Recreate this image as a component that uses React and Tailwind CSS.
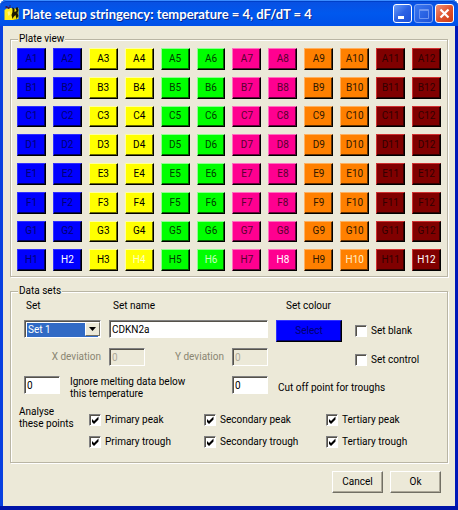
import { useState } from "react";
import clsx from "clsx";

const ROWS = ["A", "B", "C", "D", "E", "F", "G", "H"];

// one entry per pair of plate columns
const SETS = [
  { bg: "bg-[#0000ff]", edge: "border-t-[#3030ff] border-l-[#3030ff]", text: "text-[#000070]", control: "text-white" },
  { bg: "bg-[#ffff00]", edge: "border-t-[#ffffa0] border-l-[#ffffa0]", text: "text-black", control: "text-[#ffffc0]" },
  { bg: "bg-[#00ff00]", edge: "border-t-[#90ff90] border-l-[#90ff90]", text: "text-[#003c00]", control: "text-[#c8ffc0]" },
  { bg: "bg-[#ff0090]", edge: "border-t-[#ff70c0] border-l-[#ff70c0]", text: "text-[#58002e]", control: "text-white" },
  { bg: "bg-[#ff8000]", edge: "border-t-[#ffb060] border-l-[#ffb060]", text: "text-[#301800]", control: "text-[#fff0c8]" },
  { bg: "bg-[#800000]", edge: "border-t-[#d03030] border-l-[#d03030]", text: "text-[#300000]", control: "text-white" },
];

const POINTS = [
  "Primary peak",
  "Secondary peak",
  "Tertiary peak",
  "Primary trough",
  "Secondary trough",
  "Tertiary trough",
];

const SUNKEN =
  "border border-t-[#808080] border-l-[#808080] border-r-white border-b-white shadow-[inset_1px_1px_0_#55524a]";

const Well = ({ row, col }) => {
  const set = SETS[Math.floor((col - 1) / 2)];
  const isControl = row === "H" && col % 2 === 0;

  return (
    <button
      type="button"
      className={clsx(
        "flex items-center justify-center border border-r-black border-b-black shadow-[inset_-1px_-1px_0_rgba(0,0,0,0.6)]",
        set.bg,
        set.edge,
        isControl ? set.control : set.text,
      )}>
      {row}
      {col}
    </button>
  );
};

const Group = ({ title, className, children }) => (
  <fieldset
    className={clsx(
      "min-w-0 border border-[#b9b5a4] px-1.5 shadow-[1px_1px_0_#fff,inset_1px_1px_0_#fff]",
      className,
    )}>
    <legend className="ml-px bg-[#ece9d8] px-px">{title}</legend>
    {children}
  </fieldset>
);

const Check = ({ label, defaultChecked, className }) => (
  <label className={clsx("flex items-center gap-1", className)}>
    <span className="relative flex size-3">
      <input
        type="checkbox"
        defaultChecked={defaultChecked}
        className={clsx("peer size-3 appearance-none bg-white", SUNKEN)}
      />
      <svg viewBox="0 0 12 12" className="pointer-events-none absolute inset-0 hidden size-3 peer-checked:block">
        <path d="M3 5 L5 7 L9.500 2.500 V5.500 L5 10 L3 8 Z" fill="#000" />
      </svg>
    </span>
    {label}
  </label>
);

const PushButton = ({ children }) => (
  <button
    type="button"
    className="h-[22px] w-[51px] border border-t-white border-l-white border-r-[#716f64] border-b-[#716f64] bg-[#ece9d8] shadow-[inset_-1px_-1px_0_#aca899]">
    {children}
  </button>
);

const NumberBox = ({ id, value, disabled, className }) => (
  <input
    id={id}
    type="text"
    defaultValue={value}
    disabled={disabled}
    className={clsx(
      "h-[18px] w-9 pl-0.5",
      SUNKEN,
      disabled ? "bg-[#ece9d8] text-[#aca899]" : "bg-white",
      className,
    )}
  />
);

const TitleBar = () => (
  <header className="flex h-[26px] items-center rounded-t-md bg-linear-to-b from-[#0a4fe0] via-[#0058ee] to-[#0050e8] pr-1 pl-1 shadow-[inset_0_1px_0_#3a8cff,inset_0_2px_0_#0040c8]">
    <svg viewBox="0 0 15 16" className="size-4 shrink-0">
      <path d="M0 5 L3 3 L7 3 L9 5 L9 15 L0 15 Z" fill="#ffee20" />
      <path d="M8 4 L14 3 L14 14 L8 15 Z" fill="#f4e000" />
      <path d="M1 1 H3 V3 H1 Z M5 0 H6 V3 H5 Z M3 2 H5 V4 H3 Z" fill="#302060" />
      <path d="M8 2 L10 4 L10 7 L12 6 L11 3 L13 2 L14 5 L13 8 L14 11 L12 14 L11 10 L9 12 L8 14 L7 10 L8 7 Z" fill="#1c1800" />
      <path d="M3 7 L5 6 L6 9 L4 11 Z" fill="#fff68c" />
    </svg>
    <h1 className="mt-0.5 ml-0.5 flex-1 truncate font-[Lato,sans-serif] text-[13px] leading-5 font-bold text-white [text-shadow:1px_1px_0_#0a2a90]">
      Plate setup stringency: temperature = 4, dF/dT = 4
    </h1>
    <div className="mt-px flex gap-0.5">
      <button
        type="button"
        aria-label="Minimize"
        className="size-[19px] rounded-[3px] border border-white bg-linear-to-br from-[#6c9cf8] via-[#2c62e4] to-[#1c50d8]">
        <svg viewBox="0 0 17 17">
          <rect x="4" y="11" width="6" height="3" fill="#fff" />
        </svg>
      </button>
      <button
        type="button"
        aria-label="Maximize"
        disabled
        className="size-[19px] rounded-[3px] border border-[#7ea4f4] bg-linear-to-br from-[#3c78f0] to-[#1c50d8]">
        <svg viewBox="0 0 17 17">
          <path d="M4.500 4.500 H13.500 V13.500 H4.500 Z M4 5.500 H14" fill="none" stroke="#6c94f0" />
        </svg>
      </button>
      <button
        type="button"
        aria-label="Close"
        className="size-[19px] rounded-[3px] border border-white bg-linear-to-br from-[#f09078] via-[#e05430] to-[#cc3c14]">
        <svg viewBox="0 0 17 17">
          <path d="M4.500 4.500 L12.500 12.500 M12.500 4.500 L4.500 12.500" stroke="#fff" strokeWidth="2.200" />
        </svg>
      </button>
    </div>
  </header>
);

export default function App() {
  const [set, setSet] = useState("Set 1");

  return (
    <div className="flex min-h-screen flex-col rounded-t-md border-b-4 border-[#0014a8] bg-[#0014a8] font-[Roboto,sans-serif] text-[10px] leading-3 text-black">
      <TitleBar />

      <main className="flex-1 border-r-3 border-l-3 border-r-[#0018b8] border-l-[#0840e0] bg-[#ece9d8] px-[7px] pt-[7px]">
        <Group title="Plate view" className="pt-[3px] pb-[5px]">
          <div className="grid h-[223px] grid-cols-12 grid-rows-8 gap-[7px]">
            {ROWS.map((row) =>
              Array.from({ length: 12 }, (_, i) => <Well key={row + i} row={row} col={i + 1} />),
            )}
          </div>
        </Group>

        <Group title="Data sets" className="mt-2 pt-[3px] pb-3.5">
          <div className="grid grid-cols-[77px_1fr_66px_91px] gap-x-2 pl-[7px]">
            <label htmlFor="set" className="pl-0.5">
              Set
            </label>
            <label htmlFor="set-name" className="pl-1">
              Set name
            </label>
            <span className="col-span-2 pl-2.5">Set colour</span>

            <div className={clsx("relative mt-2 h-[18px] bg-white p-0.5", SUNKEN)}>
              <select
                id="set"
                value={set}
                onChange={(e) => setSet(e.target.value)}
                className="block h-3.5 w-full appearance-none bg-[#316ac5] pl-px text-white">
                <option>Set 1</option>
                <option>Set 2</option>
                <option>Set 3</option>
              </select>
              <span className="pointer-events-none absolute inset-y-px right-0 flex w-[15px] items-center justify-center border border-t-white border-l-white border-r-[#716f64] border-b-[#716f64] bg-[#ece9d8]">
                <svg viewBox="0 0 7 4" className="h-1 w-[7px]">
                  <path d="M0 0 H7 L3.500 4 Z" fill="#000" />
                </svg>
              </span>
            </div>
            <input
              id="set-name"
              type="text"
              defaultValue="CDKN2a"
              className={clsx("mt-2 h-[18px] min-w-0 bg-white pl-0.5", SUNKEN)}
            />
            <button
              type="button"
              className="mt-2 h-[22px] border border-t-[#3030ff] border-r-black border-b-black border-l-[#3030ff] bg-[#0000ff] text-[#000070] shadow-[inset_-1px_-1px_0_#000080]">
              Select
            </button>
            <Check label="Set blank" className="mt-2 pl-[5px]" />

            <label htmlFor="x-dev" className="mt-1.5 self-center text-right text-[#8a8672]">
              X deviation
            </label>
            <div className="mt-1.5 flex items-center justify-between text-[#8a8672]">
              <NumberBox id="x-dev" value="0" disabled />
              <span className="flex items-center gap-2">
                <label htmlFor="y-dev">Y deviation</label>
                <NumberBox id="y-dev" value="0" disabled />
              </span>
            </div>
            <Check label="Set control" className="col-start-4 self-end pl-[5px]" />

            <div className="col-span-2 mt-2.5 flex items-start">
              <NumberBox id="ignore-below" value="0" />
              <label htmlFor="ignore-below" className="ml-2.5">
                Ignore melting data below
                <br />
                this temperature
              </label>
              <NumberBox id="cut-off" value="0" className="ml-auto" />
            </div>
            <label htmlFor="cut-off" className="col-span-2 mt-2.5 self-center pl-0.5">
              Cut off point for troughs
            </label>
          </div>

          <div className="mt-1.5 flex pl-0.5">
            <p className="w-[70px] shrink-0">
              Analyse
              <br />
              these points
            </p>
            <div className="mt-2 grid flex-1 grid-cols-[115fr_122fr_115fr] gap-y-2.5">
              {POINTS.map((point) => (
                <Check key={point} label={point} defaultChecked />
              ))}
            </div>
          </div>
        </Group>

        <footer className="flex justify-end gap-[7px] pt-2 pr-[7px] pb-3">
          <PushButton>Cancel</PushButton>
          <PushButton>Ok</PushButton>
        </footer>
      </main>
    </div>
  );
}
